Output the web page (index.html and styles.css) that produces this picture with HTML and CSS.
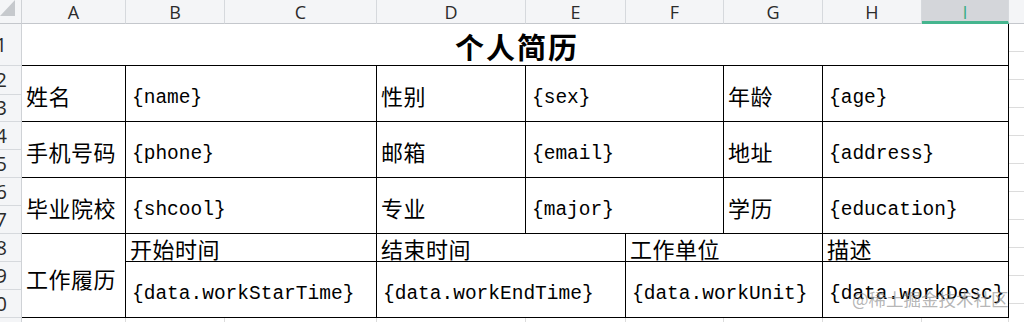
FILE: index.html
```html
<!DOCTYPE html>
<html lang="zh-CN">
<head>
<meta charset="utf-8">
<title>个人简历</title>
<link rel="stylesheet" href="styles.css">
</head>
<body>
<div class="sheet">
  <div class="col-head">
    <div class="corner"><span class="tri"></span></div>
    <div class="ch">A</div>
    <div class="ch">B</div>
    <div class="ch">C</div>
    <div class="ch">D</div>
    <div class="ch">E</div>
    <div class="ch">F</div>
    <div class="ch">G</div>
    <div class="ch">H</div>
    <div class="ch ch-sel">I</div>
    <div class="ch ch-last"></div>
  </div>

  <div class="body">
    <div class="row-head">
      <div class="rh r-title">1</div>
      <div class="rh r-29">2</div>
      <div class="rh r-27">3</div>
      <div class="rh">4</div>
      <div class="rh">5</div>
      <div class="rh">6</div>
      <div class="rh">7</div>
      <div class="rh">8</div>
      <div class="rh">9</div>
      <div class="rh">10</div>
    </div>

    <div class="resume">
      <div class="cell title span-all">个人简历</div>

      <div class="cell label">姓名</div>
      <div class="cell value span-bc">{name}</div>
      <div class="cell label">性别</div>
      <div class="cell value span-2">{sex}</div>
      <div class="cell label">年龄</div>
      <div class="cell value span-2">{age}</div>

      <div class="cell label">手机号码</div>
      <div class="cell value span-bc">{phone}</div>
      <div class="cell label">邮箱</div>
      <div class="cell value span-2">{email}</div>
      <div class="cell label">地址</div>
      <div class="cell value span-2">{address}</div>

      <div class="cell label">毕业院校</div>
      <div class="cell value span-bc">{shcool}</div>
      <div class="cell label">专业</div>
      <div class="cell value span-2">{major}</div>
      <div class="cell label">学历</div>
      <div class="cell value span-2">{education}</div>

      <div class="cell label work-label">工作履历</div>
      <div class="cell label sub span-2">开始时间</div>
      <div class="cell label sub span-2">结束时间</div>
      <div class="cell label sub span-2">工作单位</div>
      <div class="cell label sub span-2">描述</div>

      <div class="cell value span-2">{data.workStarTime}</div>
      <div class="cell value span-2">{data.workEndTime}</div>
      <div class="cell value span-2">{data.workUnit}</div>
      <div class="cell value span-2">{data.workDesc}</div>
    </div>

    <div class="right-grid">
      <div class="gr r-title"></div>
      <div class="gr r-29"></div>
      <div class="gr r-27"></div>
      <div class="gr"></div>
      <div class="gr"></div>
      <div class="gr"></div>
      <div class="gr"></div>
      <div class="gr"></div>
      <div class="gr"></div>
      <div class="gr"></div>
    </div>
  </div>

  <div class="bottom-grid">
    <div class="bg-rh"></div>
    <div class="bg"></div><div class="bg"></div><div class="bg"></div>
    <div class="bg"></div><div class="bg"></div><div class="bg"></div>
    <div class="bg"></div><div class="bg"></div><div class="bg"></div>
    <div class="bg bg-last"></div>
  </div>

  <div class="watermark">@稀土掘金技术社区</div>
</div>
</body>
</html>
```

FILE: styles.css
```css
* { box-sizing: border-box; }

html, body {
  margin: 0;
  padding: 0;
  background: #ffffff;
  overflow: hidden;
}

.sheet {
  position: relative;
  width: 1024px;
  height: 322px;
  overflow: hidden;
  font-family: "Noto Sans CJK SC", sans-serif;
  color: #000;
}

/* ---------- column header ---------- */
.col-head {
  display: grid;
  grid-template-columns: 22px 104px 99px 152px 149px 100px 98px 99px 99px 87px 15px;
  height: 24px;
}

.corner {
  background: #f4f5f7;
  border-right: 1px solid #cfd2d6;
  border-bottom: 1px solid #c4c7cc;
  display: flex;
  align-items: flex-start;
}

.tri {
  display: block;
  width: 15px;
  height: 16px;
  background: #c6c9cd;
  clip-path: polygon(100% 0, 100% 100%, 0 100%);
}

.ch {
  background: #f4f5f7;
  border-right: 1px solid #d6d9dd;
  border-bottom: 1px solid #c4c7cc;
  display: flex;
  align-items: center;
  justify-content: center;
  font-family: "Open Sans", "Noto Sans", sans-serif;
  font-size: 18px;
  line-height: 1;
  color: #2b2b2b;
  padding-top: 1px;
}

.ch-sel {
  background: #d4d6da;
  color: #3aae86;
  border-bottom: 3px solid #45b58e;
  padding-top: 2px;
}

.ch-last {
  border-right: none;
}

/* ---------- body ---------- */
.body {
  display: grid;
  grid-template-columns: 22px 987px 15px;
  height: 294px;
}

.row-head {
  display: flex;
  flex-direction: column;
  background: #f4f5f7;
  border-right: 1px solid #cfd2d6;
}

.rh {
  height: 28px;
  border-bottom: 1px solid #d6d9dd;
  display: flex;
  align-items: center;
  justify-content: flex-end;
  padding-right: 14px;
  overflow: hidden;
  white-space: nowrap;
  font-family: "Open Sans", "Noto Sans", sans-serif;
  font-size: 20px;
  line-height: 1;
  color: #2b2b2b;
}

.r-title { height: 42px; }
.r-29 { height: 29px; }
.r-27 { height: 27px; }

/* ---------- resume table ---------- */
.resume {
  display: grid;
  grid-template-columns: 104px 99px 152px 149px 100px 98px 99px 99px 87px;
  grid-template-rows: 42px 56px 56px 56px 28px 56px;
}

.cell {
  border-right: 1px solid #000;
  border-bottom: 1px solid #000;
  display: flex;
  align-items: center;
  padding-left: 4px;
  white-space: nowrap;
  overflow: hidden;
}

.span-all { grid-column: 1 / span 9; }
.span-bc { grid-column: span 2; }
.span-2 { grid-column: span 2; }

.title {
  justify-content: center;
  font-size: 29px;
  font-weight: 700;
  letter-spacing: 2px;
  padding-left: 4px;
  padding-top: 2px;
}

.label {
  font-size: 22px;
  letter-spacing: 0.5px;
  line-height: 1;
  padding-top: 3px;
}

.sub {
  padding-top: 1px;
}

.work-label {
  grid-row: span 2;
  padding-top: 4px;
}

.value {
  font-family: "Liberation Mono", "DejaVu Sans Mono", monospace;
  font-size: 19.5px;
  line-height: 1;
  padding-left: 6px;
  padding-top: 11px;
}

/* ---------- surrounding grid lines ---------- */
.right-grid {
  display: flex;
  flex-direction: column;
}

.gr {
  height: 28px;
  border-bottom: 1px solid #dcdcdc;
}

.bottom-grid {
  display: grid;
  grid-template-columns: 22px 104px 99px 152px 149px 100px 98px 99px 99px 87px 15px;
  height: 4px;
}

.bg-rh {
  background: #f4f5f7;
  border-right: 1px solid #cfd2d6;
}

.bg {
  border-right: 1px solid #dcdcdc;
}

.bg-last { border-right: none; }

/* ---------- watermark overlay ---------- */
.watermark {
  position: absolute;
  left: 852px;
  top: 290px;
  font-size: 17.5px;
  line-height: 1;
  color: rgba(140, 140, 140, 0.65);
  white-space: nowrap;
  pointer-events: none;
}
```
